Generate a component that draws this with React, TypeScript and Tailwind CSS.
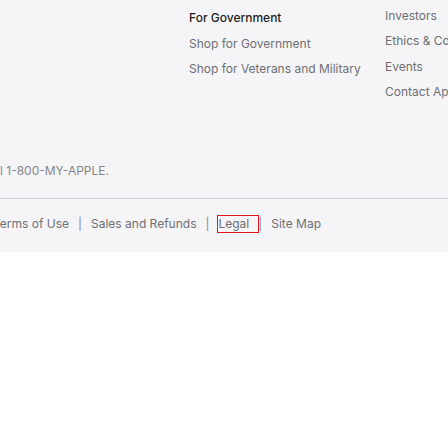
import React from "react";

const governmentLinks = ["Shop for Government", "Shop for Veterans and Military"];
const appleLinks = ["Investors", "Ethics & Compliance", "Events", "Contact Apple"];
const legalLinks = ["Terms of Use", "Sales and Refunds", "Legal", "Site Map"];

export default function App() {
  return (
    <div
      className="w-[448px] h-[448px] overflow-hidden bg-white text-[12px] leading-4"
      style={{ fontFamily: "Inter, 'Noto Sans', sans-serif" }}
    >
      <footer className="bg-[#f5f5f7] pt-[10px] pb-[20px]">
        <div className="flex h-[100px] pl-[189px] whitespace-nowrap">
          <div className="w-[196px] shrink-0 flex flex-col gap-[9.6px]">
            <div className="font-medium text-[#1d1d1f]">For Government</div>
            {governmentLinks.map((link) => (
              <a key={link} href="#" className="text-[#6e6e73]">
                {link}
              </a>
            ))}
          </div>
          <div className="shrink-0 -mt-[2.5px] flex flex-col gap-[9.6px]">
            {appleLinks.map((link) => (
              <a key={link} href="#" className="text-[#6e6e73]">
                {link}
              </a>
            ))}
          </div>
        </div>

        <div className="mt-[53px] pb-[19px] border-b border-[#d2d2d7] whitespace-nowrap text-[#86868b]">
          l 1-800-MY-APPLE.
        </div>

        <div className="pt-[17px] flex items-center whitespace-nowrap text-[#6e6e73] -ml-[7px]">
          {legalLinks.map((link, i) => (
            <React.Fragment key={link}>
              <a
                href="#"
                className={`pr-[9px] ${link === "Legal" ? "outline outline-1 outline-[#e5161b]" : ""}`}
              >
                {link}
              </a>
              {i < legalLinks.length - 1 && (
                <span className="mr-[9px] text-[#86868b]">|</span>
              )}
            </React.Fragment>
          ))}
        </div>
      </footer>
    </div>
  );
}
